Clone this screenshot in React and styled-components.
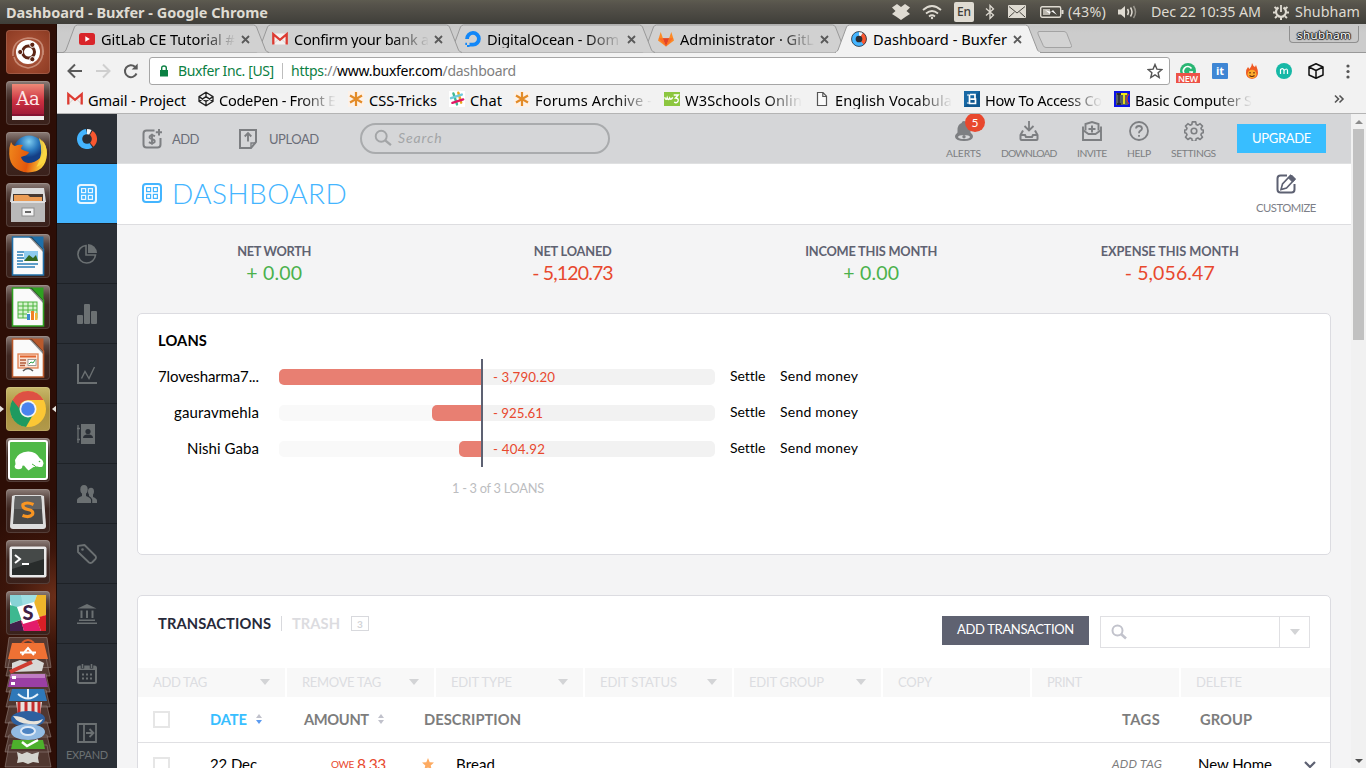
import React, { useLayoutEffect, useRef, useState } from "react";
import styled, { createGlobalStyle, css } from "styled-components";

const PAGE_FONT = `Lato, "Open Sans", sans-serif`;
const SHELL_FONT = `"Noto Sans", "Open Sans", sans-serif`;

const GlobalStyle = createGlobalStyle`
  * { box-sizing: border-box; }
  body { margin: 0; overflow: hidden; background: #2c0e06; }
  svg { display: block; flex: none; }
`;

/* ---------- text that is tracked to fill a set width ---------- */
const TextBox = styled.span`
  display: inline-block;
  flex: none;
  width: ${(p) => p.$w}px;
  font-size: ${(p) => p.$size}px;
  font-weight: ${(p) => p.$weight || 400};
  font-style: ${(p) => (p.$italic ? "italic" : "normal")};
  color: ${(p) => p.$color || "inherit"};
  line-height: ${(p) => p.$lh || 18}px;
  white-space: nowrap;
`;
function Text({ w, size, weight, color, italic, lh, children }) {
  const ref = useRef(null);
  const [spacing, setSpacing] = useState(0);
  useLayoutEffect(() => {
    const el = ref.current;
    const n = el.textContent.length;
    setSpacing((w - el.getBoundingClientRect().width) / Math.max(1, n - 0.5));
  }, []);
  return (
    <TextBox $w={w} $size={size} $weight={weight} $color={color} $italic={italic} $lh={lh}>
      <span ref={ref} style={{ letterSpacing: `${spacing}px` }}>{children}</span>
    </TextBox>
  );
}
const Green = styled.span`
  color: #0b8043;
`;
const Black = styled.span`
  color: #000;
`;

/* ---------- desktop ---------- */
const Desktop = styled.div`
  width: 1366px;
  height: 768px;
  display: flex;
  flex-direction: column;
  overflow: hidden;
  font-family: ${SHELL_FONT};
`;
const SystemBar = styled.header`
  height: 24px;
  flex: none;
  display: flex;
  align-items: center;
  justify-content: space-between;
  padding: 0 6px 1px 6px;
  color: #dfdbd2;
  background: linear-gradient(#5d5b50, #56534b 20%, #3f3e39);
`;
const Indicators = styled.div`
  display: flex;
  align-items: center;
`;
const Indicator = styled.span`
  display: flex;
  margin-left: ${(p) => p.$gap}px;
`;
const KeyboardBadge = styled.span`
  display: flex;
  align-items: center;
  justify-content: center;
  width: 20px;
  height: 20px;
  margin-left: 12px;
  border-radius: 2px;
  background: #dfdbd2;
`;
const Workspace = styled.div`
  flex: 1;
  min-height: 0;
  display: flex;
`;

/* ---------- launcher ---------- */
const Launcher = styled.nav`
  width: 57px;
  flex: none;
  padding: 6px 7px 0 6px;
  display: flex;
  flex-direction: column;
  gap: 7px;
  background: radial-gradient(circle at 100% 77%, #6b2f1a 0, #3d160b 8%, #2d0e06 16%);
  border-right: 1px solid #1d0a05;
  overflow: hidden;
`;
const Tile = styled.div`
  position: relative;
  width: 44px;
  height: 44px;
  flex: none;
  display: flex;
  align-items: center;
  justify-content: center;
  border-radius: 4px;
  box-shadow: inset 0 0 0 1px rgba(255, 255, 255, 0.13);
  background: ${(p) => p.$bg || "linear-gradient(#8d7e79 0, #584540 22%, #3e2620 45%, #3a211b)"};
`;
const RunningArrow = styled.i`
  position: absolute;
  top: 18px;
  ${(p) => p.$side}: -7px;
  border: 4px solid transparent;
  border-${(p) => p.$side}: 5px solid #e6e1dc;
  border-${(p) => (p.$side === "left" ? "right" : "left")}-width: 0;
`;
const Stack = styled.div`
  margin: -5px 0 0 -2px;
`;

/* ---------- browser window ---------- */
const Browser = styled.section`
  flex: 1;
  min-width: 0;
  display: flex;
  flex-direction: column;
`;
const TabStrip = styled.div`
  height: 29px;
  flex: none;
  display: flex;
  align-items: flex-start;
  padding-left: 6px;
  background: linear-gradient(#c6c6c6, #cccccc 30%, #cccccc);
  box-shadow: inset 0 -1px #999;
`;
const TabBox = styled.div`
  position: relative;
  z-index: ${(p) => p.$z};
  width: 206px;
  height: 29px;
  flex: none;
  display: flex;
  align-items: center;
  padding: 1px 0 0 16px;
  margin-right: -13px;
`;
const TabShape = styled.svg`
  position: absolute;
  inset: 0;
  z-index: -1;
`;
const fade = css`
  mask-image: linear-gradient(90deg, #000 calc(100% - 36px), transparent);
`;
const TabLabel = styled.div`
  width: 135px;
  height: 20px;
  margin: -2px 5px 0 6px;
  color: #000;
  ${(p) => p.$fade && fade}
`;
const NewTab = styled.svg`
  margin: 6px 0 0 9px;
`;
const ProfileBadge = styled.div`
  display: flex;
  justify-content: center;
  width: 70px;
  height: 17px;
  margin: 2px 7px 0 auto;
  border: 1px solid #8f8f8f;
  border-top: 0;
  border-radius: 0 0 4px 4px;
  background: #c8c8c8;
  color: #fff;
  text-shadow: 0 0 1px #222, 1px 0 1px #222, -1px 0 1px #222, 0 1px 1px #222, 0 -1px 1px #222;
`;
const AddressRow = styled.div`
  height: 36px;
  flex: none;
  display: flex;
  align-items: center;
  padding: 0 2px 0 8px;
  background: #f2f2f2;
`;
const NavButton = styled.span`
  width: 18px;
  margin-right: 10px;
`;
const Omnibox = styled.div`
  width: 1021px;
  height: 28px;
  display: flex;
  align-items: center;
  padding: 0 6px 0 9px;
  border: 1px solid #a6a6a6;
  border-radius: 3px;
  background: #fff;
`;
const Divider = styled.i`
  width: 1px;
  height: ${(p) => p.$h}px;
  margin: ${(p) => p.$m};
  background: ${(p) => p.$color};
`;
const Grow = styled.span`
  flex: 1;
`;
const Extensions = styled.div`
  display: grid;
  grid-template-columns: repeat(6, 32px);
  place-items: center;
  margin-left: 2px;
`;
const BookmarkBar = styled.div`
  height: 25px;
  flex: none;
  display: flex;
  align-items: center;
  gap: 12px;
  padding: 0 21px 5px 10px;
  background: #f2f2f2;
  border-bottom: 1px solid #b4b4b4;
`;
const Bookmark = styled.div`
  display: flex;
  align-items: center;
  gap: 5px;
  color: #000;
`;
const BookmarkLabel = styled.div`
  width: ${(p) => p.$w}px;
  height: 20px;
  ${(p) => p.$fade && fade}
`;

/* ---------- app ---------- */
const Page = styled.div`
  flex: 1;
  min-height: 0;
  display: flex;
  font-family: ${PAGE_FONT};
`;
const Sidebar = styled.aside`
  width: 60px;
  flex: none;
  background: #2a2f36;
`;
const SideItem = styled.div`
  height: ${(p) => p.$h || 60}px;
  display: flex;
  flex-direction: column;
  align-items: center;
  justify-content: center;
  gap: ${(p) => p.$gap || 0}px;
  color: #6b7072;
  border-bottom: 1px solid #1d2126;
  background: ${(p) => (p.$active ? "#44b5ff" : "transparent")};
`;
const Main = styled.main`
  flex: 1;
  min-width: 0;
  overflow: hidden;
  background: #f4f4f5;
`;
const TopBar = styled.div`
  height: 50px;
  display: flex;
  align-items: center;
  padding: 0 25px;
  background: #d5d6d8;
  border-bottom: 1px solid #dfe0e1;
  color: #7d7f82;
`;
const TopAction = styled.div`
  display: flex;
  align-items: center;
  gap: ${(p) => p.$gap}px;
  margin-right: ${(p) => p.$mr}px;
`;
const SearchPill = styled.div`
  width: 250px;
  height: 31px;
  display: flex;
  align-items: center;
  gap: 6px;
  padding-left: 12px;
  margin-top: -1px;
  border: 2px solid #a9abad;
  border-radius: 16px;
  color: #a3a5a7;
`;
const ToolItem = styled.div`
  position: relative;
  display: flex;
  flex-direction: column;
  align-items: center;
  gap: 5px;
  margin: 4px 20px 0 0;
`;
const AlertCount = styled.span`
  position: absolute;
  top: -8px;
  right: -4px;
  width: 20px;
  height: 19px;
  display: flex;
  align-items: center;
  justify-content: center;
  border-radius: 50%;
  background: #e8482e;
`;
const UpgradeButton = styled.button`
  width: 89px;
  height: 29px;
  margin-left: 1px;
  padding: 0 0 2px;
  border: 0;
  font-family: inherit;
  background: #38beff;
  color: #fff;
`;
const TitleBar = styled.div`
  height: 61px;
  display: flex;
  align-items: center;
  padding: 0 35px 3px 25px;
  background: #fff;
  border-bottom: 1px solid #dddde0;
`;
const PageTitle = styled.div`
  margin: 0 0 0 10px;
`;
const Customize = styled.div`
  display: flex;
  flex-direction: column;
  align-items: center;
  gap: 6px;
  margin: 5px 0 0 auto;
  color: #5d6172;
`;
const Stats = styled.div`
  height: 88px;
  display: grid;
  grid-template-columns: repeat(4, 1fr);
  padding: 17px 32px 0 8px;
`;
const Stat = styled.div`
  display: flex;
  flex-direction: column;
  align-items: center;
`;
const Card = styled.section`
  height: ${(p) => p.$h}px;
  margin: 0 20px 40px;
  border: 1px solid #dcdce1;
  border-radius: 5px;
  background: #fff;
`;
const LoansTitle = styled.div`
  height: 45px;
  padding: 16px 20px 0;
`;
const LoanRow = styled.div`
  height: 36px;
  display: flex;
  align-items: center;
`;
const LoanName = styled.div`
  width: 121px;
  margin: -3px 20px 0 0;
  display: flex;
  justify-content: flex-end;
`;
const Owed = styled.div`
  width: 202px;
  height: 16px;
  display: flex;
  justify-content: flex-end;
  border-radius: 5px 0 0 5px;
  background: #f9f9f9;
`;
const OwedBar = styled.div`
  height: 16px;
  border-radius: 5px 0 0 5px;
  background: #e87f72;
`;
const Axis = styled.div`
  width: 2px;
  height: 36px;
  background: #5d6172;
`;
const LoanAmount = styled.div`
  width: 232px;
  height: 16px;
  display: flex;
  align-items: center;
  padding-left: 10px;
  margin-right: 15px;
  border-radius: 0 5px 5px 0;
  background: #f2f2f2;
`;
const LoanLinks = styled.div`
  display: flex;
  gap: 15px;
  margin-top: -3px;
`;
const LoanPager = styled.div`
  padding: 10px 0 0 314px;
`;
const TxHeader = styled.div`
  height: 72px;
  display: flex;
  align-items: flex-start;
  padding: 20px 20px 0;
`;
const TrashCount = styled.span`
  width: 18px;
  height: 15px;
  display: flex;
  align-items: center;
  justify-content: center;
  margin-left: 11px;
  border: 1px solid #d8d9dd;
`;
const TxTabs = styled.div`
  display: flex;
  align-items: center;
  height: 15px;
`;
const TabTitle = styled.span`
  display: flex;
  margin-top: -2px;
`;
const AddButton = styled.button`
  width: 147px;
  height: 29px;
  margin-left: auto;
  padding: 0 0 3px;
  border: 0;
  font-family: inherit;
  color: #fff;
  background: #5f6271;
`;
const TxSearch = styled.div`
  width: 210px;
  height: 32px;
  margin-left: 11px;
  display: flex;
  align-items: center;
  padding-left: 10px;
  border: 1px solid #e0e0e3;
`;
const TxSearchMenu = styled.span`
  width: 30px;
  height: 30px;
  display: flex;
  align-items: center;
  justify-content: center;
  border-left: 1px solid #e0e0e3;
`;
const Caret = styled.i`
  border: 5px solid transparent;
  border-top: 6px solid #d3d4d6;
  border-bottom: 0;
`;
const BulkActions = styled.div`
  height: 29px;
  display: grid;
  grid-template-columns: repeat(7, 147px) 1fr;
  gap: 2px;
`;
const BulkAction = styled.div`
  display: flex;
  align-items: center;
  justify-content: space-between;
  padding: 0 15px 2px;
  background: #f8f8f8;
`;
const TxRow = styled.div`
  height: 46px;
  display: grid;
  grid-template-columns: 57px 94px ${(p) => (p.$head ? "120px" : "118px")} 1fr 78px 130px;
  align-items: center;
  padding-left: 15px;
  border-bottom: 1px solid #e0e0e3;
`;
const Cell = styled.div`
  display: flex;
  align-items: center;
  gap: ${(p) => p.$gap || 0}px;
  padding-left: ${(p) => p.$pl || 0}px;
  padding-bottom: ${(p) => p.$pb || 0}px;
`;
const Outdent = styled.span`
  display: flex;
  margin-left: -${(p) => p.$by}px;
`;
const Checkbox = styled.span`
  width: 17px;
  height: 17px;
  border: 2px solid #e6e6e6;
  background: #fff;
`;
const Scrollbar = styled.div`
  width: 15px;
  flex: none;
  display: flex;
  flex-direction: column;
  align-items: center;
  justify-content: space-between;
  padding: 6px 0 5px;
  background: #f1f1f1;
`;
const Thumb = styled.div`
  width: 11px;
  height: 211px;
  margin: 5px 0 auto;
  background: #c1c1c1;
`;
const ScrollArrow = styled.i`
  border: 4px solid transparent;
  ${(p) => (p.$up ? "border-bottom-color: #8b8b8b; border-top: 0;" : "border-top-color: #505050; border-bottom: 0;")}
`;

/* ---------- icons ---------- */
const Icon = ({ w = 20, h = w, vb, children, ...rest }) => (
  <svg width={w} height={h} viewBox={vb || `0 0 ${w} ${h}`} fill="none" {...rest}>{children}</svg>
);
const GridIcon = ({ color }) => (
  <Icon stroke={color}>
    <rect x="1" y="1" width="18" height="18" rx="3" strokeWidth="2" />
    <g strokeWidth="1.2">
      <rect x="4.6" y="4.6" width="4" height="4" /><rect x="11.4" y="4.6" width="4" height="4" />
      <rect x="4.6" y="11.4" width="4" height="4" /><rect x="11.4" y="11.4" width="4" height="4" />
    </g>
  </Icon>
);
const Magnifier = ({ size, width = 2 }) => (
  <Icon w={size} vb="0 0 17 17" stroke="currentColor" strokeWidth={width}>
    <circle cx="6.8" cy="6.8" r="5.2" /><path d="M10.6 10.700 L16 15.300" strokeWidth={width + 0.4} />
  </Icon>
);
const GmailIcon = ({ w = 16 }) => (
  <Icon w={w} vb="0 0 16 16">
    <path d="M1 2.5h14v11H1z" fill="#f4f1f0" />
    <path d="M1 13.5 L6 8.5 M15 13.5 L10 8.5" stroke="#d8cfcd" />
    <path d="M1.3 13.6V3.2L8 8.8l6.7-5.6v10.4" stroke="#dd3b32" strokeWidth="2.3" />
  </Icon>
);
const AsteriskIcon = () => (
  <Icon w={16}>
    <rect width="16" height="16" fill="#fdf1e7" />
    <path d="M8 1v14M2 4.5l12 7M14 4.5l-12 7" stroke="#e38b27" strokeWidth="2.2" />
  </Icon>
);
const BuxferIcon = ({ w }) =>
  w === 16 ? (
    <Icon w={16} vb="0 0 20 20">
      <circle cx="10" cy="10" r="9.300" fill="#44b5ff" />
      <path d="M10 10V.7a9.300 9.300 0 0 1 5 1.400z" fill="#f4f4f4" />
      <path d="M10 10l5-7.900a9.300 9.300 0 0 1 1 15z" fill="#f9572f" />
      <circle cx="10" cy="10" r="9.300" stroke="#2a2f36" strokeWidth="1" />
      <circle cx="10" cy="10" r="4.200" fill="#2a2f36" />
    </Icon>
  ) : (
    <Icon w={w} vb="0 0 20 20">
      <path d="M9 .1a10 10 0 1 0 6.500 18.300L12 13.500z" fill="#44b5ff" />
      <path d="M10 0q2.600 0 4.600 1L12 6h-2z" fill="#f4f4f4" />
      <path d="M15.500 1.700a10 10 0 0 1 1 16L12.500 13l.5-7z" fill="#f9572f" />
      <circle cx="10" cy="10" r="4.800" fill="#2a2f36" />
    </Icon>
  );
const favicons = {
  youtube: <Icon w={16}><rect y="2" width="16" height="12" rx="2.5" fill="#d9252a" /><path d="M6.3 5.2 10.8 8 6.3 10.8z" fill="#fff" /></Icon>,
  gmail: <GmailIcon />,
  ocean: <Icon w={16}><path d="M8 13.700A5.900 5.900 0 1 0 2.100 8" stroke="#1287f8" strokeWidth="3.800" /><path d="M4.500 11.800h3.500v3.600H4.500zM2 13.900h2.500v2H2zM.300 11.800h1.700v2.100H.300z" fill="#1287f8" /></Icon>,
  gitlab: <Icon w={16}><path d="M8 15.500 0 9.500 2.700 1l2.200 6.300h6.200L13.300 1 16 9.500z" fill="#fc8a26" /><path d="M8 15.500 4.800 7.300h6.400z" fill="#e24329" /><path d="M8 15.500 4.800 7.300H.8z" fill="#fc6d26" /><path d="M8 15.500l3.200-8.200h4z" fill="#fc6d26" /></Icon>,
  buxfer: <BuxferIcon w={16} />,
  codepen: <Icon w={16} stroke="#222" strokeWidth="1.3"><path d="M8 1.2 15 5.6v4.8L8 14.8 1 10.4V5.6zM1 5.6l7 4.8 7-4.8M1 10.4l7-4.8 7 4.8M8 1.2v4.4M8 10.4v4.4" /></Icon>,
  asterisk: <AsteriskIcon />,
  slack: <Icon w={16} strokeWidth="2.4" strokeLinecap="round"><rect width="16" height="16" fill="#fff" /><path d="M4.4 2.4 8 13.4" stroke="#3eb991" /><path d="M9.3 1.7 12.2 11.7" stroke="#e9a820" /><path d="M2 7.2 12.8 3.6" stroke="#6ecadc" /><path d="M3.4 11.8 14.2 8.4" stroke="#e01765" /></Icon>,
  w3: <Icon w={16}><rect y="1" width="16" height="14" fill="#8cc63f" /><path d="M.7 6.300q1.300 4 2.500.4q1.300 3.500 2.500.4q1.200 2.500 3-.8M9.700 4h4.500l-2.700 3q3.300 0 2.600 3-1 2.600-4 1.200" stroke="#fff" strokeWidth="1.400" /></Icon>,
  doc: <Icon w={16} stroke="#555" strokeWidth="1.2"><path d="M3.5 1.5h5.5l3.5 3.7v9.3h-9zM8.8 1.5v4h3.7" fill="#fafafa" /></Icon>,
  b: <Icon w={16}><rect width="16" height="16" fill="#1768a5" /><path d="M0 16 16 0v16z" fill="#0f578f" /><path d="M3 4h2M3 12h2" stroke="#fff" /><path d="M5.5 3.5v9h6v-4.3h-5M6 3.5h5v4.5" stroke="#fff" strokeWidth="1.7" /></Icon>,
  it: <Icon w={16}><rect width="16" height="16" fill="#0b12e8" /><rect x="2" y="2" width="12" height="12" fill="#555f65" /><path d="M3 3h4M5 3v10M3 13h4" stroke="#222" strokeWidth="1.3" /><path d="M7 3h6M10 3v10" stroke="#f2e614" strokeWidth="1.8" /><path d="M15 3l-3 5 3 5" stroke="#e2213b" /></Icon>,
};
const CloseIcon = () => <Icon w={9} vb="0 0 9 9" stroke="#5a5a5a" strokeWidth="1.8"><path d="M1 1l7 7M8 1L1 8" /></Icon>;
const SortIcon = ({ active }) => (
  <Icon w={6} h={10}><path d="M3 0 6 4H0z" fill="#c0c1cb" /><path d="M3 10 6 6H0z" fill={active ? "#5b9bf0" : "#c0c1cb"} /></Icon>
);

const OfficeIcon = ({ color, children }) => (
  <Icon w={34} h={42} vb="0 0 34 42">
    <path d="M1.500 2h19L32.500 14v26h-31z" fill="#fafafa" stroke={color} strokeWidth="1.6" />
    <path d="M20 1.500h12.500V15z" fill={color} /><path d="M18 2l14 15V14L21 2z" fill="#222" opacity=".5" />
    {children}
  </Icon>
);

const launcherItems = [
  { bg: "radial-gradient(circle, #c88a72, #a04a30 45%, #8b3a22)", icon: (
    <Icon w={44}>
      <path d="M7 26Q6 10 22 8q17 0 15 17M36 15q4 20-14 23Q10 36 8 27" stroke="#d9a592" strokeWidth="1.6" opacity=".7" />
      <circle cx="22" cy="22" r="12" fill="#fff" />
      <circle cx="22.5" cy="22" r="6" stroke="#5c2414" strokeWidth="3" />
      <g fill="#5c2414" stroke="#fff" strokeWidth="1"><circle cx="14.2" cy="22" r="2.6" /><circle cx="26.3" cy="14.8" r="2.6" /><circle cx="26.3" cy="29.2" r="2.6" /></g>
    </Icon>) },
  { icon: (
    <Icon w={36} h={40}>
      <defs><linearGradient id="dict" x2="0" y2="1"><stop stopColor="#ee8a77" /><stop offset=".5" stopColor="#cc3040" /><stop offset="1" stopColor="#941335" /></linearGradient></defs>
      <rect x="2" y="1" width="32" height="34" fill="url(#dict)" /><path d="M2 33h32v4H2z" fill="#f1eded" /><path d="M2 32h32" stroke="#7c1230" strokeWidth="1.5" />
      <text x="18" y="22" textAnchor="middle" fontFamily="DejaVu Serif, serif" fontSize="18" fill="#fbe9e9">Aa</text>
    </Icon>) },
  { icon: (
    <Icon w={40}>
      <defs>
        <radialGradient id="globe" cx=".5" cy=".2"><stop stopColor="#7fcdf0" /><stop offset=".6" stopColor="#2a78bd" /><stop offset="1" stopColor="#143f86" /></radialGradient>
        <linearGradient id="fox" x2="1" y2=".2"><stop stopColor="#f08a1c" /><stop offset=".6" stopColor="#e3560c" /><stop offset="1" stopColor="#fbd33c" /></linearGradient>
      </defs>
      <circle cx="21" cy="17" r="15.500" fill="url(#globe)" />
      <path d="M3 8q1 3 4 4 4-2 8-1-2 2-2 4 3 2 8 3-1 3-5 4l-3 1q1 5 7 6 7 0 12-5 6-7 2-18 5 5 5 14Q38 38 20 38.500 2 37 1.200 20 1 13 3 8z" fill="url(#fox)" />
      <path d="M31 4q9 7 7.500 17-2 9-10 12 8-13 2.500-29z" fill="#fcd843" opacity=".9" />
    </Icon>) },
  { icon: (
    <Icon w={38} h={38}>
      <path d="M3 2h32l2 14H1z" fill="#dcdcdc" /><path d="M4 8h30v9H4z" fill="#473a33" /><path d="M5 9h14l2 2h12v6H5z" fill="#eb9c55" />
      <path d="M2 15h34v21H2z" fill="#b9b9b9" /><path d="M2 15h34v2H2z" fill="#dedede" />
      <rect x="13" y="22" width="12" height="8" fill="#f3f3f3" stroke="#8d8d8d" /><path d="M16 25h6v2h-6z" fill="#666" />
    </Icon>) },
  { icon: (
    <OfficeIcon color="#1f6fa8">
      <path d="M6 17h7M6 20h6M6 23h7M6 26h6" stroke="#2a7fb8" strokeWidth="1.5" /><rect x="13" y="16" width="14" height="10" fill="#8ecbef" /><path d="M13 26l5-6 4 3 3-3 2 6z" fill="#33691e" />
      <path d="M6 29h21M6 32h18" stroke="#2a7fb8" strokeWidth="1.6" />
    </OfficeIcon>) },
  { icon: (
    <OfficeIcon color="#2fa021">
      <rect x="7" y="16" width="19" height="16" fill="#d8f3d0" stroke="#4cb43f" /><path d="M7 20h19M7 24h19M7 28h19M12 16v16M17 16v16M22 16v16" stroke="#4cb43f" />
      <path d="M16 27h10v7H16z" fill="#fff" /><path d="M16 28h3v6h-3z" fill="#3c8ad0" /><path d="M20 25h3v9h-3z" fill="#f08024" /><path d="M24 27h2.500v7H24z" fill="#f2b63a" />
    </OfficeIcon>) },
  { icon: (
    <OfficeIcon color="#b8592c">
      <rect x="7" y="17" width="20" height="14" fill="#fbe2d3" stroke="#e0804f" strokeWidth="1.3" /><path d="M9 19.500h16" stroke="#e0632c" strokeWidth="2" />
      <path d="M9 23h6M9 26h6M9 28.500h5" stroke="#b45d3d" strokeWidth="1.5" /><rect x="17" y="22.500" width="8" height="6" fill="#fff" stroke="#777" strokeWidth=".7" /><path d="M18 27l2-2 2 1 2-3" stroke="#32a34a" /><path d="M12 34q5-5 10 0" stroke="#555" strokeWidth="1.6" />
    </OfficeIcon>) },
  { bg: "linear-gradient(#c9b96b, #a8903d 50%, #b29a4b)", running: true, icon: (
    <Icon w={38} vb="0 0 38 38">
      <circle cx="19" cy="19" r="18" fill="#fbc735" />
      <path d="M19 19 3.400 10A18 18 0 0 0 17 37l8-14z" fill="#1f9a60" />
      <path d="M3.400 10A18 18 0 0 1 34.600 10H19q-8 1-9 8z" fill="#dd5144" />
      <circle cx="19" cy="19" r="8.500" fill="#f4f4f4" /><circle cx="19" cy="19" r="6.800" fill="#4a83ee" />
    </Icon>) },
  { icon: (
    <Icon w={40}>
      <rect x="1" y="1" width="38" height="38" rx="2" fill="#4fb947" stroke="#fff" strokeWidth="2" />
      <path d="M7 20q3-8 13-8.500 8-.2 12 7 3 1 3.500 5l-1 3q-2 1-5 0l-4 .5-5 3.500-2-2-2.500-3-5 1-3 1.500z" fill="#fff" /><ellipse cx="10.500" cy="26.500" rx="3.800" ry="2.800" fill="#fff" />
      <path d="M24 24q4 2 5 4" stroke="#4fb947" /><circle cx="31.500" cy="21.500" r=".8" fill="#4fb947" />
    </Icon>) },
  { icon: (
    <Icon w={38} h={40}>
      <path d="M3 5 6 4h26l3 1 2 30q0 3-3 3H4q-3 0-3-3z" fill="#ddd" /><path d="M6 5h26l2 28H4z" fill="#4a4a4a" /><path d="M6 5h26l1 13H5z" fill="#626262" />
      <path d="M24.500 13.500q-7-3-10.500 0-1 4 5 5 6 1 4.500 5-3 3.500-10 1" stroke="#f99522" strokeWidth="3.200" />
    </Icon>) },
  { icon: (
    <Icon w={38} h={34}>
      <rect x=".5" y="1.500" width="37" height="31" rx="2" fill="#e9e9e9" /><rect x="3" y="4" width="32" height="26" fill="#282c2b" /><path d="M3 4h32v10L3 24z" fill="#454948" />
      <path d="M6 10l5 4-5 4" stroke="#fff" strokeWidth="2" /><path d="M13 19h7" stroke="#fff" strokeWidth="2" />
    </Icon>) },
  { icon: (
    <Icon w={36} vb="0 0 36 36">
      <rect width="36" height="36" fill="#fff" /><path d="M0 0h11l5 11-12 5-4-10z" fill="#88d3d6" /><path d="M11 0h16l-3 9-11 3z" fill="#9fdfe3" /><path d="M27 0h9v20l-8 3-5-12z" fill="#edb52b" />
      <path d="M0 10l7 2 6 12-13 5z" fill="#3eb890" /><path d="M0 29l11-4 3 11H0z" fill="#40204a" /><path d="M11 26l15-4 5 14H14z" fill="#e31b6b" /><path d="M26 23l10-3v16h-5z" fill="#d81f26" />
      <path d="M7 12 24 7l6 17-17 5z" fill="#fff" />
      <text x="18" y="25" textAnchor="middle" fontFamily="Lato, sans-serif" fontWeight="900" fontSize="20" fill="#3f2147">S</text>
    </Icon>) },
];

const LauncherStack = () => (
  <Icon w={48} h={132}>
    <g fill="#6e5a54" fillOpacity=".55" stroke="#a1918b" strokeOpacity=".5">
      <path d="M5 .5h38l4 30H1zM6 21h36l4 18H2zM6 37h36l4 18H2zM6 53h36l4 17H2zM5 69h38l4 17H1zM5 85h38l4 15H1zM5 98h38l4 17H1zM5 108h38l4 22H1z" />
    </g>
    <path d="M8 6h32l4 16H4z" fill="#ef7134" /><path d="M18 6q6-6 12 0" stroke="#d65a2a" strokeWidth="2" /><path d="M18 18l6-7 6 7M16 15.500h16" stroke="#fff" strokeWidth="2" />
    <path d="M8 26l8-3 8 2 8-3 8 4-2 8-30 1z" fill="#d8d8d6" /><path d="M6 35 28 25" stroke="#cf3b30" strokeWidth="4" />
    <path d="M7 37h34l3 13H4z" fill="#9a3fa4" /><path d="M7 37h34v4H6z" fill="#c07cc4" /><path d="M8 39h4v3H8zM7 45h4v3H7z" fill="#fff" />
    <path d="M8 52h32l3 12H5z" fill="#2f78b8" /><path d="M24 52v9M14 57q10 9 20 0" stroke="#e8f2fa" strokeWidth="2" />
    <path d="M12 65h26l-2 13H14z" fill="#e8e2de" /><path d="M15 65v12M22 65v12M29 65v12M35 65v12" stroke="#c42c2c" strokeWidth="3" />
    <ellipse cx="24" cy="82" rx="17" ry="8" fill="#2e609f" /><path d="M9 79q9 0 14 4 8 3 16-1-4 8-14 5Q14 87 9 79z" fill="#e9e4da" />
    <ellipse cx="24" cy="95" rx="17" ry="8" fill="#93bbe2" /><ellipse cx="24" cy="94" rx="7" ry="4" fill="#4d84c2" stroke="#dfeaf6" strokeWidth="2" />
    <path d="M9 103h30l2 9H7z" fill="#4db02c" /><path d="M18 105l5 4 11-6" stroke="#fff" strokeWidth="2.500" />
    <path d="M13 115l5 2 5-2 5 2 7-2-1 6 1 5-6-1-5 2-5-2-6 1 1-5z" fill="#d4d4ce" />
  </Icon>
);

const sideItems = [
  <Icon key="pie" stroke="currentColor"><path d="M9 1.500A8.800 8.800 0 1 0 18.500 11H9z" strokeWidth="1.600" /><path d="M11 0a9 9 0 0 1 9 9h-9z" fill="currentColor" stroke="none" /></Icon>,
  <Icon key="bars"><rect y="11" width="6" height="9" rx="1" fill="currentColor" /><rect x="7" width="6" height="20" rx="1" fill="currentColor" /><rect x="14" y="7" width="6" height="13" rx="1" fill="currentColor" /></Icon>,
  <Icon key="line" stroke="currentColor"><path d="M1 0v19h19" strokeWidth="2" /><path d="M4.500 14.500 8 7.500l4 7L17.500 3" strokeWidth="1.400" /></Icon>,
  <Icon key="book"><path d="M4 0h14v20H4z" fill="currentColor" /><path d="M1 1v18M0 4.500h3M0 15.500h3" stroke="currentColor" strokeWidth="1.300" /><circle cx="11" cy="7.500" r="2.600" fill="#2a2f36" /><path d="M6 14q0-3 3.500-3.500h3Q16 11 16 14z" fill="#2a2f36" /></Icon>,
  <Icon key="people" h={18}><g fill="currentColor"><ellipse cx="7" cy="4.500" rx="3.700" ry="4.500" /><path d="M0 18v-3q0-2 5-4V8h4v3q5 2 5 4v3z" /><ellipse cx="14" cy="6.500" rx="3" ry="3.700" /><path d="M15.200 18v-3.500q-.5-2-3.200-3.500V9h4v3q4 1.500 4 3.500V18z" /></g></Icon>,
  <Icon key="tag" stroke="currentColor"><path d="M1 1.800 7.500 1 18.500 12q1 1.500 0 3l-3.500 3.500q-1.500 1-3 0L1 8z" strokeWidth="1.800" strokeLinejoin="round" /><circle cx="5.500" cy="5.500" r="1.300" fill="currentColor" stroke="none" /></Icon>,
  <Icon key="bank"><path d="M10 0 19.500 4.500H.5zM3.500 6.500h2V14h-2zM9 6.500h2V14H9zM14.500 6.500h2V14h-2zM2 15.500h16v1.500H2zM0 18.500h20V20H0z" fill="currentColor" /></Icon>,
  <Icon key="cal"><rect x="1" y="2.500" width="18" height="16.500" rx="1.500" stroke="currentColor" strokeWidth="2" /><path d="M1 2.500h18V6H1z" fill="currentColor" /><path d="M5.500 0v4.500M14.500 0v4.500" stroke="#2a2f36" strokeWidth="3.400" /><path d="M5.500 0v4M14.500 0v4" stroke="currentColor" strokeWidth="1.600" /><path d="M5 10.500h10M5 14.500h10" stroke="currentColor" strokeWidth="2" strokeDasharray="2 2" /></Icon>,
];

const topTools = [
  { label: "ALERTS", w: 35, count: true, icon: <Icon><path d="M10 0q2 0 2.400 2Q16.500 3.500 16.500 9v2.500Q19 13.500 19 16q-1 4-9 4t-9-4q0-2.500 2.500-4.500V9Q3.500 3.500 7.600 2 8 0 10 0z" fill="currentColor" /><ellipse cx="10" cy="16" rx="6" ry="2" fill="#d5d6d8" /><circle cx="10" cy="15.800" r="1.700" fill="currentColor" /></Icon> },
  { label: "DOWNLOAD", w: 56, icon: <Icon stroke="currentColor" strokeWidth="2"><path d="M10 0v9M5.500 5l4.500 4.500L14.500 5" strokeWidth="1.800" /><path d="M4 9.500 1.500 14v4q0 1 1 1h15q1 0 1-1v-4L16 9.500M1.500 14H6l1 2h6l1-2h4.500" /></Icon> },
  { label: "INVITE", w: 30, icon: <Icon stroke="currentColor" strokeWidth="1.900"><path d="M3.500 9.500V3L10 1l6.500 2v6.500" /><path d="M1 5.500V19h18V5.500M1.500 9.500l5 3.500h7l5-3.500" /><path d="M10 4.500v7M6.500 8h7" strokeWidth="2" /></Icon> },
  { label: "HELP", w: 24, icon: <Icon stroke="currentColor"><circle cx="10" cy="10" r="9" strokeWidth="1.800" /><path d="M7 7.500q.3-2.500 3-2.500t3 2.500q0 1.500-1.800 2.400Q10 10.600 10 12.200M10 14v1.800" strokeWidth="1.800" /></Icon> },
  { label: "SETTINGS", w: 45, icon: <Icon stroke="currentColor" strokeWidth="1.600"><circle cx="10" cy="10" r="2.800" /><path d="M8.300.9h3.400l.5 2.600 1.700.7 2.200-1.500 2.400 2.400L17 7.300l.7 1.500 1.500.3v2.600l-1.700.5-.6 1.700 1.600 2.200-2.400 2.400-2.200-1.500-1.700.7-.5 2.500H8.300l-.5-2.500-1.700-.7-2.200 1.500-2.400-2.400L3 13.900l-.7-1.700-1.600-.5V9.100l1.700-.4L3 7.200 1.500 5.100l2.400-2.400 2.200 1.500 1.700-.7z" strokeLinejoin="round" /></Icon> },
];

/* ---------- data ---------- */
const tabs = [
  { icon: "youtube", label: "GitLab CE Tutorial #", w: 134 },
  { icon: "gmail", label: "Confirm your bank a", w: 135 },
  { icon: "ocean", label: "DigitalOcean - Dom", w: 132 },
  { icon: "gitlab", label: "Administrator · GitL", w: 134 },
  { icon: "buxfer", label: "Dashboard - Buxfer", w: 134, active: true },
];
const bookmarks = [
  { icon: "gmail", label: "Gmail - Project", w: 98 },
  { icon: "codepen", label: "CodePen - Front E", w: 117, faded: true },
  { icon: "asterisk", label: "CSS-Tricks", w: 68 },
  { icon: "slack", label: "Chat", w: 32 },
  { icon: "asterisk", label: "Forums Archive -", w: 117, faded: true },
  { icon: "w3", label: "W3Schools Onlin", w: 117, faded: true },
  { icon: "doc", label: "English Vocabula", w: 117, faded: true },
  { icon: "b", label: "How To Access Co", w: 117, faded: true },
  { icon: "it", label: "Basic Computer S", w: 117, faded: true },
];
const stats = [
  { label: "NET WORTH", w: 74, value: "+ 0.00", vw: 56, up: true },
  { label: "NET LOANED", w: 78, value: "- 5,120.73", vw: 81 },
  { label: "INCOME THIS MONTH", w: 132, value: "+ 0.00", vw: 56, up: true },
  { label: "EXPENSE THIS MONTH", w: 138, value: "- 5,056.47", vw: 90 },
];
const loans = [
  { name: "7lovesharma7...", w: 101, bar: 202, amount: "- 3,790.20", aw: 62 },
  { name: "gauravmehla", w: 85, bar: 49, amount: "- 925.61", aw: 50 },
  { name: "Nishi Gaba", w: 72, bar: 22, amount: "- 404.92", aw: 52 },
];
const bulk = [
  ["ADD TAG", 54, 1], ["REMOVE TAG", 79, 1], ["EDIT TYPE", 61, 1], ["EDIT STATUS", 77, 1],
  ["EDIT GROUP", 75, 1], ["COPY", 34], ["PRINT", 35], ["DELETE", 46],
];

function SystemPanel() {
  return (
    <SystemBar>
      <Text w={262} size={14.5} weight={700}>Dashboard - Buxfer - Google Chrome</Text>
      <Indicators>
        <Icon w={18} h={16}><path d="M5 0l4 3 4-3 5 3.500-3.500 3.500L18 10l-4 2.500L9 16l-5-3.500L0 10l3.500-3L0 3.500z" fill="#dfdbd2" /></Icon>
        <Indicator $gap={12}><Icon w={20} h={16} stroke="#dfdbd2" strokeWidth="1.800"><path d="M1 6q9-8 18 0M4 9.500q6-5 12 0M7 12.500q3-2.500 6 0" /><circle cx="10" cy="14" r="1.200" fill="#dfdbd2" stroke="none" /></Icon></Indicator>
        <KeyboardBadge><Text w={14} size={12} color="#3f3e39" weight={500}>En</Text></KeyboardBadge>
        <Indicator $gap={11}><Icon w={10} h={16} stroke="#dfdbd2" strokeWidth="1.300"><path d="M1 4.500 8.500 11 5 14.500V1.500L8.500 5 1 11.500" /></Icon></Indicator>
        <Indicator $gap={13}><Icon w={18} h={13}><rect width="18" height="13" rx="1" fill="#dfdbd2" /><path d="M1 1.500 9 8l8-6.500M1 12l5.500-5M17 12l-5.500-5" stroke="#4a4842" /></Icon></Indicator>
        <Indicator $gap={14}><Icon w={24} h={12} stroke="#dfdbd2"><rect x=".7" y=".7" width="20" height="10.600" rx="1.500" strokeWidth="1.400" /><path d="M22.500 4v4" strokeWidth="2" /><path d="M3 3h7v6H3z" fill="#dfdbd2" stroke="none" opacity=".75" /><path d="M5 4l5 4 1-3 6 4-4-5-2 2z" fill="#fff" stroke="none" /></Icon></Indicator>
        <Indicator $gap={4}><Text w={38} size={14.3}>(43%)</Text></Indicator>
        <Indicator $gap={12}><Icon w={20} h={14} stroke="#dfdbd2" strokeWidth="1.500"><path d="M0 4.500h3L7 1v12L3 9.500H0z" fill="#dfdbd2" stroke="none" /><path d="M9.500 4q2 3 0 6M12.500 2.500q3 4.500 0 9" /><path d="M15.500 1q4 6 0 12" opacity=".5" /></Icon></Indicator>
        <Indicator $gap={13}><Text w={110} size={14.3}>Dec 22 10:35 AM</Text></Indicator>
        <Indicator $gap={12}><Icon w={16} stroke="#dfdbd2"><path d="M5.500 3.500a5 5 0 1 0 5 0" strokeWidth="2.200" /><path d="M8 1v7" strokeWidth="1.800" /><path d="M1.500 3l2 1.500M14.500 3l-2 1.500M0 8.500h2.500M16 8.500h-2.500M2 14l2-1.700M14 14l-2-1.700M8 13.500V16" strokeWidth="2" /></Icon></Indicator>
        <Indicator $gap={6}><Text w={65} size={14.3}>Shubham</Text></Indicator>
      </Indicators>
    </SystemBar>
  );
}

function Tab({ tab, index }) {
  const fill = tab.active ? "#f2f2f2" : "#d1d1d1";
  return (
    <TabBox $z={tab.active ? 10 : 9 - index}>
      <TabShape width="206" height="29" viewBox="0 0 206 29">
        <path d="M0 28.500 Q2 28 3 26L11.500 3Q12.500 1 14.500 1H190.500Q192.500 1 193.500 3L202.500 26Q203.500 28 206 28.500" fill={fill} stroke="#999" />
        {tab.active && <path d="M1 28.500h204" stroke="#f2f2f2" strokeWidth="1.500" />}
      </TabShape>
      {favicons[tab.icon]}
      <TabLabel $fade={!tab.active}><Text w={tab.w} size={14.6} lh={20}>{tab.label}</Text></TabLabel>
      <CloseIcon />
    </TabBox>
  );
}

function BrowserChrome() {
  return (
    <>
      <TabStrip>
        {tabs.map((t, i) => <Tab key={t.label} tab={t} index={i} />)}
        <NewTab width="36" height="19" viewBox="0 0 36 19"><path d="M2 1.500h25q2 0 2.800 2l4.700 12q.5 2-1.500 2H9q-2 0-2.800-2L1 4Q.3 1.500 2 1.500z" fill="#d3d3d3" stroke="#a3a3a3" /></NewTab>
        <ProfileBadge><Text w={54} size={11.5} lh={17}>shubham</Text></ProfileBadge>
      </TabStrip>
      <AddressRow>
        <NavButton><Icon w={18} stroke="#5a5a5a" strokeWidth="2"><path d="M17 9H3.500M10 2.500 3.500 9 10 15.500" /></Icon></NavButton>
        <NavButton><Icon w={18} stroke="#cfcfcf" strokeWidth="2"><path d="M3 9h13M10 2.500 16.500 9 10 15.500" /></Icon></NavButton>
        <NavButton><Icon w={18} stroke="#5a5a5a" strokeWidth="2"><path d="M15.500 11.500A6 6 0 1 1 14 4.700" /><path d="M16.700 1.500v6h-6z" fill="#5a5a5a" stroke="none" /></Icon></NavButton>
        <Omnibox>
          <Icon w={10} h={12}><path d="M1 5h8v6.500H1z" fill="#0b8043" /><path d="M2.700 5V3q0-2 2.300-2t2.300 2v2" stroke="#0b8043" strokeWidth="1.400" /></Icon>
          <Divider $h={0} $m="0 8px 0 0" />
          <Text w={96} size={14} color="#0b8043">Buxfer Inc. [US]</Text>
          <Divider $h={16} $m="0 8px" $color="#bdbdbd" />
          <Text w={225} size={14} color="#808080"><Green>https</Green>://<Black>www.buxfer.com</Black>/dashboard</Text>
          <Grow />
          <Icon w={16} stroke="#555" strokeWidth="1.400"><path d="M8 1.500l1.900 4.600 4.900.4-3.700 3.200 1.100 4.800L8 11.900l-4.200 2.600 1.100-4.800L1.200 6.500l4.900-.4z" /></Icon>
        </Omnibox>
        <Extensions>
          <Icon w={24} h={24}><circle cx="12" cy="12" r="8" fill="#2ab673" /><path d="M15.500 9.500a4.500 4.500 0 1 0 .7 3.500h-3" stroke="#fff" strokeWidth="1.600" /><rect y="14" width="24" height="11" fill="#ed5347" /><text x="12" y="23" textAnchor="middle" fontSize="9" fontWeight="600" fontFamily="Open Sans, sans-serif" fill="#fff" textLength="20">NEW</text></Icon>
          <Icon w={16}><rect width="16" height="16" rx="1" fill="#3e86d4" /><text x="8" y="12" textAnchor="middle" fontSize="11" fontWeight="700" fontFamily="Open Sans, sans-serif" fill="#fff">it</text></Icon>
          <Icon w={16}><path d="M8 0q1 3 3 4l1-2q2 5 2 8 0 5-6 6-6-1-6-6 0-4 2-6l1.500 2Q8 3 8 0z" fill="#ef5a23" /><ellipse cx="8" cy="11" rx="4.500" ry="4.300" fill="#fdab2b" /><path d="M6 9v1.500M10 9v1.500M5.500 12.500q2.500 2 5 0" stroke="#5a2010" strokeWidth="1.200" /></Icon>
          <Icon w={16}><circle cx="8" cy="8" r="8" fill="#16b8a6" /><path d="M4.500 11V6.500q3-2 3.500 1V11M8 7.500q3-3 3.500 0V11" stroke="#fff" strokeWidth="1.200" /></Icon>
          <Icon w={16} stroke="#111" strokeWidth="1.500"><path d="M8 .8 15 4v8L8 15.200 1 12V4zM1 4l7 3.500L15 4M8 7.500V15" strokeLinejoin="round" /></Icon>
          <Icon w={10} h={16}><g fill="#555"><circle cx="5" cy="3" r="1.600" /><circle cx="5" cy="8.500" r="1.600" /><circle cx="5" cy="14" r="1.600" /></g></Icon>
        </Extensions>
      </AddressRow>
      <BookmarkBar>
        {bookmarks.map((b) => (
          <Bookmark key={b.label}>
            {favicons[b.icon]}
            <BookmarkLabel $w={b.w} $fade={b.faded}><Text w={b.w} size={14.6} lh={19}>{b.label}</Text></BookmarkLabel>
          </Bookmark>
        ))}
        <Grow />
        <Icon w={12} h={10} stroke="#555" strokeWidth="1.600"><path d="M2 1.500 5.500 5 2 8.500M6.500 1.500 10 5 6.500 8.500" /></Icon>
      </BookmarkBar>
    </>
  );
}

function AppSidebar() {
  return (
    <Sidebar>
      <SideItem $h={50}><BuxferIcon w={20} /></SideItem>
      <SideItem $active><GridIcon color="#e9f6ff" /></SideItem>
      {sideItems.map((icon) => <SideItem key={icon.key}>{icon}</SideItem>)}
      <SideItem $h={80} $gap={2}>
        <Icon stroke="currentColor" strokeWidth="1.800"><path d="M1 1h18v18H1zM7 1v18" /><path d="M9 10h7M12.500 6l4 4-4 4" /></Icon>
        <Text w={42} size={11} lh={20}>EXPAND</Text>
      </SideItem>
    </Sidebar>
  );
}

function AppTopBar() {
  return (
    <TopBar>
      <TopAction $gap={10} $mr={40}>
        <Icon stroke="currentColor"><path d="M12.500 1.500H4.500q-3 0-3 3v11q0 3 3 3h11q3 0 3-3V9" strokeWidth="2" /><path d="M17 0v6.500M13.800 3.200h6.200" strokeWidth="2" /><path d="M13 7.300q-3.500-2-5.300 0-.8 2 2.200 2.800 3.500.8 2.700 3-2 2.200-5.700 0M10 4.800v11" strokeWidth="1.900" /></Icon>
        <Text w={27} size={13} color="#6b6e78">ADD</Text>
      </TopAction>
      <TopAction $gap={12} $mr={41}>
        <Icon w={18} h={20} stroke="currentColor"><path d="M1 1h16v12l-5 6H1z" strokeWidth="2" /><path d="M12 19v-5h5" strokeWidth="1.400" /><path d="M9 12.500V4.500M5.700 7.500 9 4.200l3.300 3.300" strokeWidth="1.900" /></Icon>
        <Text w={50} size={13} color="#6b6e78">UPLOAD</Text>
      </TopAction>
      <SearchPill><Magnifier size={18} width={1.8} /><Text w={44} size={14} italic>Search</Text></SearchPill>
      <Grow />
      {topTools.map((t) => (
        <ToolItem key={t.label}>
          {t.icon}
          <Text w={t.w} size={10.3} lh={14}>{t.label}</Text>
          {t.count && <AlertCount><Text w={7} size={12} color="#fff">5</Text></AlertCount>}
        </ToolItem>
      ))}
      <UpgradeButton><Text w={59} size={13}>UPGRADE</Text></UpgradeButton>
    </TopBar>
  );
}

function Loans() {
  return (
    <Card $h={242}>
      <LoansTitle><Text w={49} size={14.7} weight={700} color="#000">LOANS</Text></LoansTitle>
      {loans.map((l) => (
        <LoanRow key={l.name}>
          <LoanName><Text w={l.w} size={15} color="#000">{l.name}</Text></LoanName>
          <Owed><OwedBar style={{ width: l.bar }} /></Owed>
          <Axis />
          <LoanAmount><Text w={l.aw} size={13.3} color="#e8482e">{l.amount}</Text></LoanAmount>
          <LoanLinks>
            <Text w={35} size={14} color="#000">Settle</Text>
            <Text w={78} size={14} color="#000">Send money</Text>
          </LoanLinks>
        </LoanRow>
      ))}
      <LoanPager><Text w={92} size={12.8} color="#bcbdbf">1 - 3 of 3 LOANS</Text></LoanPager>
    </Card>
  );
}

function Transactions() {
  return (
    <Card $h={300}>
      <TxHeader>
        <TxTabs>
          <TabTitle><Text w={113} size={14.7} weight={700} color="#272a3a">TRANSACTIONS</Text></TabTitle>
          <Divider $h={15} $m="0 10px" $color="#d8d9dd" />
          <TabTitle><Text w={48} size={14.7} weight={700} color="#dcdce0">TRASH</Text></TabTitle>
          <TrashCount><Text w={6} size={10} lh={12} weight={700} color="#d3d4d8">3</Text></TrashCount>
        </TxTabs>
        <AddButton><Text w={117} size={13}>ADD TRANSACTION</Text></AddButton>
        <TxSearch>
          <Icon w={16} stroke="#c2c3cc" strokeWidth="2"><circle cx="6.500" cy="6.500" r="5" /><path d="M10 10l5 4.500" strokeWidth="2.600" /></Icon>
          <Grow />
          <TxSearchMenu><Caret /></TxSearchMenu>
        </TxSearch>
      </TxHeader>
      <BulkActions>
        {bulk.map(([label, w, menu]) => (
          <BulkAction key={label}><Text w={w} size={13} color="#dcdde1">{label}</Text>{menu && <Caret />}</BulkAction>
        ))}
      </BulkActions>
      <TxRow $head>
        <Checkbox />
        <Cell $gap={9} $pb={1}><Text w={37} size={14.7} weight={700} color="#38beff">DATE</Text><SortIcon active /></Cell>
        <Cell $gap={9} $pb={1}><Text w={65} size={14.7} weight={700} color="#7d7d7d">AMOUNT</Text><SortIcon /></Cell>
        <Cell $pb={1}><Text w={97} size={14.7} weight={700} color="#7d7d7d">DESCRIPTION</Text></Cell>
        <Cell $pb={1}><Text w={38} size={14.7} weight={700} color="#7d7d7d">TAGS</Text></Cell>
        <Cell $pb={1}><Text w={52} size={14.7} weight={700} color="#7d7d7d">GROUP</Text></Cell>
      </TxRow>
      <TxRow>
        <Checkbox />
        <Cell $pb={3}><Text w={47} size={15} color="#000">22 Dec</Text></Cell>
        <Cell $pl={27} $gap={3} $pb={3}><Text w={23} size={10} lh={20} color="#e8482e">OWE</Text><Text w={29} size={15.5} color="#e8482e">8.33</Text></Cell>
        <Cell $gap={22} $pb={3}>
          <Icon w={12}><path d="M6 0l1.700 4.200 4.300.3-3.300 2.900 1 4.400L6 9.400l-3.700 2.400 1-4.400L0 4.500l4.300-.3z" fill="#fdab62" /></Icon>
          <Text w={39} size={15} color="#000">Bread</Text>
        </Cell>
        <Cell $pb={4}><Outdent $by={10}><Text w={50} size={12} italic color="#7d7d7d">ADD TAG</Text></Outdent></Cell>
        <Cell $gap={32} $pb={4}><Outdent $by={2}><Text w={74} size={15} color="#000">New Home</Text></Outdent><Icon w={12} h={10} stroke="#5d6172" strokeWidth="2.200"><path d="M1 3l5 5 5-5" /></Icon></Cell>
      </TxRow>
    </Card>
  );
}

export default function App() {
  return (
    <Desktop>
      <GlobalStyle />
      <SystemPanel />
      <Workspace>
        <Launcher>
          {launcherItems.map((item, i) => (
            <Tile key={i} $bg={item.bg}>
              {item.icon}
              {item.running && <><RunningArrow $side="left" /><RunningArrow $side="right" /></>}
            </Tile>
          ))}
          <Stack><LauncherStack /></Stack>
        </Launcher>
        <Browser>
          <BrowserChrome />
          <Page>
            <AppSidebar />
            <Main>
              <AppTopBar />
              <TitleBar>
                <GridIcon color="#44b5ff" />
                <PageTitle><Text w={175} size={28} lh={34} weight={300} color="#44b5ff">DASHBOARD</Text></PageTitle>
                <Customize>
                  <Icon stroke="currentColor"><path d="M11 1.500H4.500q-3 0-3 3v11q0 3 3 3h11q3 0 3-3V10" strokeWidth="2" /><path d="M5 15.500 6.500 10 14.500 1.500 18.500 5.500 10.500 14z" strokeWidth="1.600" /><path d="M12.500 4l4 4 3-3-4-4z" fill="currentColor" /></Icon>
                  <Text w={60} size={11.3} lh={16} color="#7d7f88">CUSTOMIZE</Text>
                </Customize>
              </TitleBar>
              <Stats>
                {stats.map((s) => (
                  <Stat key={s.label}>
                    <Text w={s.w} size={12.8} weight={700} color="#5f6271">{s.label}</Text>
                    <Text w={s.vw} size={19.5} lh={25} color={s.up ? "#4bb14c" : "#e8482e"}>{s.value}</Text>
                  </Stat>
                ))}
              </Stats>
              <Loans />
              <Transactions />
            </Main>
            <Scrollbar><ScrollArrow $up /><Thumb /><ScrollArrow /></Scrollbar>
          </Page>
        </Browser>
      </Workspace>
    </Desktop>
  );
}
